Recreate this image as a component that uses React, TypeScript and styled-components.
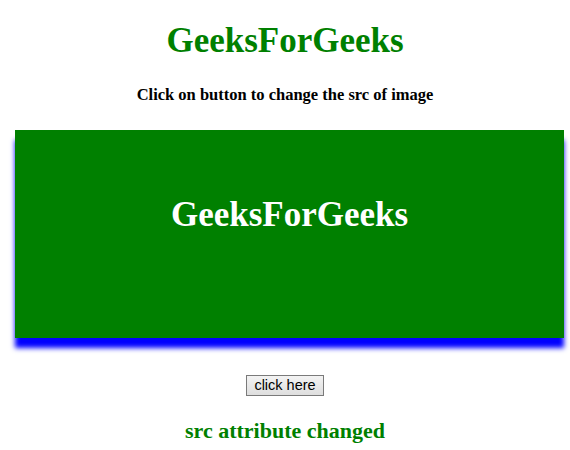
import React, { useState } from 'react';
import styled, { createGlobalStyle } from 'styled-components';

const GlobalStyle = createGlobalStyle`
  body {
    margin: 0;
    background: #fff;
    font-family: "Liberation Serif", "Times New Roman", serif;
  }
`;

const Page = styled.div`
  display: flex;
  flex-direction: column;
  align-items: center;
  padding: 21px 8px 0;
  text-align: center;
`;

const Title = styled.h1`
  margin: 0;
  font-size: 35px;
  font-weight: 700;
  color: green;
`;

const Subtitle = styled.h4`
  margin: 24px 0 0;
  font-size: 16.5px;
  font-weight: 700;
  color: #000;
`;

const Picture = styled.div`
  align-self: flex-start;
  margin: 25px 0 0 7px;
  width: 549px;
  height: 208px;
  display: flex;
  align-items: center;
  justify-content: center;
  background: green;
  box-shadow: 0 10px 5px blue;
  color: #fff;
  font-size: 35px;
  font-weight: 700;
  padding-bottom: 38px;
  box-sizing: border-box;
`;

const Button = styled.button`
  margin-top: 37px;
  height: 21px;
  padding: 0 7px;
  font-family: "Liberation Sans", Arial, sans-serif;
  font-size: 14.5px;
  color: #000;
  background: linear-gradient(#f3f3f3, #dedede);
  border: 1px solid #7a7a7a;
  border-radius: 0;
  line-height: 1;
`;

const Result = styled.h3`
  margin: 22px 0 0;
  font-size: 22px;
  font-weight: 700;
  color: green;
`;

export default function App() {
  const [changed, setChanged] = useState(true);

  return (
    <>
      <GlobalStyle />
      <Page>
        <Title>GeeksForGeeks</Title>
        <Subtitle>Click on button to change the src of image</Subtitle>
        <Picture>GeeksForGeeks</Picture>
        <Button onClick={() => setChanged(true)}>click here</Button>
        {changed && <Result>src attribute changed</Result>}
      </Page>
    </>
  );
}
